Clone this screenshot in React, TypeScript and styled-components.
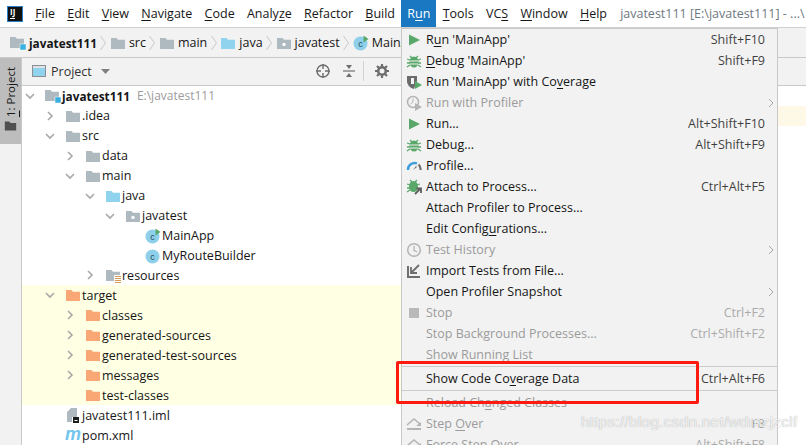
import React from "react";
import styled, { createGlobalStyle } from "styled-components";

const GlobalStyle = createGlobalStyle`
  html, body {
    margin: 0;
    padding: 0;
    background: #ffffff;
  }
  * {
    box-sizing: border-box;
  }
  u {
    text-underline-offset: 2px;
  }
`;

const FONT = `"Open Sans", "Noto Sans", sans-serif`;

const Page = styled.div`
  position: relative;
  width: 806px;
  height: 445px;
  overflow: hidden;
  font-family: ${FONT};
  font-size: 12.5px;
  color: #161616;
  background: #ffffff;
`;

/* ---------- top bars ---------- */

const MenuBar = styled.div`
  display: flex;
  align-items: center;
  height: 28px;
  padding-left: 7px;
  background: #ffffff;
  border-bottom: 1px solid #d0d0d0;
  white-space: nowrap;
`;

const Logo = styled.div`
  display: flex;
  flex-direction: column;
  justify-content: space-between;
  width: 16px;
  height: 16px;
  margin-right: 6px;
  padding: 1px 2px 2px;
  background: #111111;
  border: 1px solid #2a7fc9;
  color: #ffffff;
  font-size: 8px;
  font-weight: 700;
  line-height: 8px;

  &::after {
    content: "";
    width: 5px;
    height: 1px;
    background: #ffffff;
  }
`;

const TopMenu = styled.div<{ $active?: boolean }>`
  display: flex;
  align-items: center;
  height: 27px;
  padding: 0 6.15px;
  background: ${(p) => (p.$active ? "#1a78c2" : "transparent")};
  color: ${(p) => (p.$active ? "#ffffff" : "#161616")};
`;

const WindowTitle = styled.div`
  margin-left: 7px;
  color: #6e7880;
`;

const Crumbs = styled.div`
  display: flex;
  align-items: center;
  height: 30px;
  padding-left: 10px;
  background: #f2f2f2;
  border-bottom: 1px solid #c9c9c9;
  white-space: nowrap;
`;

const Crumb = styled.div<{ $bold?: boolean }>`
  display: flex;
  align-items: center;
  gap: 3px;
  font-size: ${(p) => (p.$bold ? "11.8px" : "inherit")};
  font-weight: ${(p) => (p.$bold ? 700 : 400)};
`;

const CrumbSep = styled.svg`
  width: 6px;
  height: 16px;
  margin: 0 3.5px;
  flex: none;
`;

/* ---------- main area ---------- */

const Main = styled.div`
  display: flex;
  height: 387px;
`;

const Strip = styled.div`
  width: 22px;
  flex: none;
  background: #f2f2f2;
  border-right: 1px solid #c9c9c9;
`;

const StripTab = styled.div`
  display: flex;
  flex-direction: column;
  align-items: center;
  gap: 2px;
  height: 86px;
  padding-top: 9px;
  background: #bdbdbd;
`;

const StripLabel = styled.span`
  writing-mode: vertical-rl;
  transform: rotate(180deg);
  line-height: 21px;
  font-size: 11.5px;
`;

const Panel = styled.div`
  width: 380px;
  flex: none;
  display: flex;
  flex-direction: column;
`;

const PanelHeader = styled.div`
  display: flex;
  align-items: center;
  height: 28px;
  padding-left: 9px;
  background: #f2f2f2;
  border-bottom: 1px solid #c9c9c9;
`;

const PanelTitle = styled.span`
  margin: 0 9px 0 4px;
  color: #333333;
`;

const PanelTools = styled.div`
  display: flex;
  align-items: center;
  margin-left: auto;
  padding-right: 12px;
  gap: 10px;
`;

const ToolDivider = styled.div`
  width: 1px;
  height: 20px;
  margin-left: -4px;
  background: #d2d2d2;
`;

const Row = styled.div<{ $depth: number; $excluded?: boolean }>`
  display: flex;
  align-items: center;
  height: 20px;
  padding-left: ${(p) => p.$depth * 20}px;
  background: ${(p) => (p.$excluded ? "#ffffe4" : "transparent")};
  white-space: nowrap;
`;

const ArrowCell = styled.div`
  display: flex;
  justify-content: center;
  width: 16px;
  margin-right: 7px;
`;

const IconCell = styled.div`
  display: flex;
  width: 16px;
  height: 16px;
  margin-right: 1px;
`;

const RowName = styled.span<{ $bold?: boolean }>`
  font-size: ${(p) => (p.$bold ? "11.8px" : "inherit")};
  font-weight: ${(p) => (p.$bold ? 700 : 400)};
`;

const RowPath = styled.span`
  margin-left: 7px;
  font-size: 12px;
  color: #9c9c9c;
`;

const PomIcon = styled.span`
  width: 15px;
  text-align: center;
  font-family: "Liberation Sans", sans-serif;
  font-size: 18px;
  line-height: 14px;
  font-style: italic;
  font-weight: 700;
  color: #72c6ec;
`;

const Editor = styled.div`
  flex: 1;
  display: flex;
  flex-direction: column;
`;

const EditorTabs = styled.div`
  height: 28px;
  background: #f2f2f2;
  border-bottom: 1px solid #c9c9c9;
`;

const CaretLine = styled.div`
  height: 20px;
  margin-top: 20px;
  background: #fef8e6;
`;

/* ---------- run menu ---------- */

const Dropdown = styled.div`
  position: absolute;
  top: 28px;
  left: 401px;
  width: 377px;
  height: 430px;
  background: #f2f2f2;
  border: 1px solid #c8c8c8;
`;

const Item = styled.div<{ $disabled?: boolean }>`
  display: grid;
  grid-template-columns: 24px 1fr auto 12px;
  align-items: center;
  height: 21px;
  white-space: nowrap;
  color: ${(p) => (p.$disabled ? "#9b9b9b" : "#161616")};
`;

const ItemIcon = styled.div`
  display: flex;
  justify-content: center;
`;

const Shortcut = styled.span`
  color: inherit;
  opacity: 0.82;
`;

const SubArrow = styled.svg`
  justify-self: center;
  width: 6px;
  height: 10px;
`;

const Separator = styled.div`
  height: 1px;
  margin: 1px 0 1px;
  background: #cdcdcd;
`;

const Annotation = styled.div`
  position: absolute;
  top: 361px;
  left: 396px;
  width: 303px;
  height: 43px;
  border: 3px solid #ff1a10;
  border-radius: 2px;
`;

const Watermark = styled.div`
  position: absolute;
  top: 413px;
  left: 581px;
  font-family: "Liberation Sans", sans-serif;
  font-size: 15.500px;
  letter-spacing: 0.2px;
  color: rgba(255, 255, 255, 0.85);
  text-shadow: 0 0 1px rgba(90, 90, 90, 0.6);
`;

/* ---------- drawings ---------- */

const Svg = ({ children, size = 16 }: { children: React.ReactNode; size?: number }) => (
  <svg width={size} height={size} viewBox="0 0 16 16">
    {children}
  </svg>
);

const FOLDER = "M1 3h5.5l1.5 1.8h7V14H1z";

const Folder = ({ color = "#afb9c0" }: { color?: string }) => (
  <Svg>
    <path d={FOLDER} fill={color} />
  </Svg>
);

const ModuleFolder = () => (
  <Svg>
    <path d={FOLDER} fill="#afb9c0" transform="translate(-1 -1)" />
    <rect x="10" y="9" width="6" height="6" fill="#37b0e0" stroke="#ffffff" strokeWidth="0.5" />
  </Svg>
);

const PackageFolder = () => (
  <Svg>
    <path d={FOLDER} fill="#afb9c0" />
    <circle cx="8" cy="9.4" r="1.7" fill="#ffffff" />
  </Svg>
);

const ResourceFolder = () => (
  <Svg>
    <path d={FOLDER} fill="#afb9c0" />
    <rect x="9" y="8" width="7" height="8" fill="#ffffff" />
    <path d="M10 9.5h6M10 11.5h6M10 13.5h6M10 15.5h6" stroke="#d39a55" strokeWidth="1" />
  </Svg>
);

const ClassIcon = ({ runnable }: { runnable?: boolean }) => (
  <Svg>
    <circle cx="7.5" cy="8.5" r="7" fill="#8ed0ea" />
    <text x="7.5" y="11.5" textAnchor="middle" fontFamily="Liberation Sans, sans-serif" fontSize="9" fill="#27485a">
      c
    </text>
    {runnable && <path d="M10.5 0.5l5 3.5-5 3.5z" fill="#59a869" />}
  </Svg>
);

const ImlIcon = () => (
  <Svg>
    <path d="M6 1h6v9H7v5H2V5z" fill="#afb9c0" />
    <rect x="8" y="10" width="6" height="6" fill="#1c1c1c" />
    <rect x="9.5" y="13" width="3" height="1" fill="#ffffff" />
  </Svg>
);

const WindowIcon = () => (
  <Svg>
    <rect x="1.5" y="2.5" width="13" height="11" fill="#8fd3ee" stroke="#8a8f93" />
    <rect x="2" y="3" width="12" height="2" fill="#dfe3e5" />
  </Svg>
);

const Caret = () => (
  <svg width="9" height="5" viewBox="0 0 9 5">
    <path d="M0 0h9L4.500 5z" fill="#7f7f7f" />
  </svg>
);

const Chevron = ({ open }: { open?: boolean }) => (
  <svg width="10" height="10" viewBox="0 0 10 10">
    <path
      d={open ? "M1 3l4 4 4-4" : "M3 1l4 4-4 4"}
      fill="none"
      stroke="#a8a8a8"
      strokeWidth="1.6"
    />
  </svg>
);

const CrumbChevron = () => (
  <CrumbSep viewBox="0 0 6 16">
    <path d="M0.500 1l5 7-5 7" fill="none" stroke="#c9c9c9" />
  </CrumbSep>
);

const Crosshair = () => (
  <Svg>
    <circle cx="8" cy="8" r="6" fill="none" stroke="#6e6e6e" strokeWidth="1.4" />
    <path d="M8 1v5M8 10v5M1 8h5M10 8h5" stroke="#6e6e6e" strokeWidth="1.4" />
  </Svg>
);

const CollapseAll = () => (
  <Svg>
    <path d="M2 8h12" stroke="#6e6e6e" strokeWidth="1.2" />
    <path d="M5 2h6L8 6zM5 14h6L8 10z" fill="#6e6e6e" />
  </Svg>
);

const Gear = () => (
  <Svg>
    <circle cx="8" cy="8" r="3.800" fill="none" stroke="#6e6e6e" strokeWidth="2.6" />
    <path
      d="M8 1v3M8 12v3M1 8h3M12 8h3M3 3l2 2M11 11l2 2M13 3l-2 2M5 11l-2 2"
      stroke="#6e6e6e"
      strokeWidth="2.200"
    />
  </Svg>
);

const StripFolder = () => (
  <Svg size={13}>
    <path d={FOLDER} fill="#4f4f4f" />
  </Svg>
);

const RunIcon = ({ color = "#59a869" }: { color?: string }) => (
  <Svg>
    <path d="M3 2.500l11 5.500-11 5.500z" fill={color} />
  </Svg>
);

const BugIcon = () => (
  <Svg>
    <path
      d="M4 3l2 2M12 3l-2 2M1 6l3 1M15 6l-3 1M1 10h3M15 10h-3M1 14l3-2M15 14l-3-2"
      stroke="#59a869"
      strokeWidth="1.300"
    />
    <ellipse cx="8" cy="9" rx="4.500" ry="5.500" fill="#59a869" />
    <path d="M4 8h8M4 11h8" stroke="#f2f2f2" />
  </Svg>
);

const CoverageIcon = () => (
  <Svg>
    <path d="M1 2h10v5l-3 8C4 14 1 11 1 7z" fill="#6b6b6b" />
    <path d="M5 4h3v6H5z" fill="#f2f2f2" />
    <path d="M9 7l7 4-7 4z" fill="#59a869" />
  </Svg>
);

const ProfilerIcon = () => (
  <Svg>
    <circle cx="7" cy="7" r="5.500" fill="none" stroke="#b4b4b4" strokeWidth="1.500" />
    <path d="M7 3.500V7l-2.500 2" fill="none" stroke="#b4b4b4" />
    <path d="M9 8l7 4-7 4z" fill="#b4b4b4" />
  </Svg>
);

const GaugeIcon = () => (
  <Svg>
    <path d="M2 12a6.500 6.500 0 0 1 9-6.500" fill="none" stroke="#3d9fdc" strokeWidth="2.400" />
    <path d="M12.500 6.500A6.500 6.500 0 0 1 14.500 12" fill="none" stroke="#6e6e6e" strokeWidth="2.200" />
    <path d="M7 12l3-4 1 1z" fill="#6e6e6e" />
  </Svg>
);

const AttachIcon = () => (
  <Svg>
    <path d="M4 1l2 2M11 1l-2 2M1 5l3 1M14 5l-3 1M1 9h3M1 13l3-2" stroke="#59a869" strokeWidth="1.300" />
    <ellipse cx="7.500" cy="7.500" rx="4.500" ry="5.500" fill="#59a869" />
    <path d="M9 15l5-5M10.500 9.500H15V14" fill="none" stroke="#5f5f5f" strokeWidth="1.800" />
  </Svg>
);

const HistoryIcon = () => (
  <Svg>
    <circle cx="8" cy="8" r="6.300" fill="none" stroke="#b4b4b4" strokeWidth="1.500" />
    <path d="M8 4v4.300l3 1.700" fill="none" stroke="#b4b4b4" strokeWidth="1.300" />
  </Svg>
);

const ImportIcon = () => (
  <Svg>
    <path d="M2 3v11h12" fill="none" stroke="#6e6e6e" strokeWidth="2" />
    <path d="M13 2L6 9M5 4v6h6" fill="none" stroke="#6e6e6e" strokeWidth="1.800" />
  </Svg>
);

const StopIcon = () => (
  <Svg>
    <rect x="3" y="3" width="10" height="10" fill="#b9b9b9" />
  </Svg>
);

const StepIcon = () => (
  <Svg>
    <path d="M1 9l7-6 6 5" fill="none" stroke="#b4b4b4" strokeWidth="1.600" />
    <path d="M10 10h5V6z" fill="#b4b4b4" />
    <rect x="1" y="12" width="14" height="2" fill="#b4b4b4" />
  </Svg>
);

/* ---------- data ---------- */

type TreeNode = {
  depth: number;
  name: string;
  icon: React.ReactNode;
  arrow?: "open" | "closed";
  bold?: boolean;
  path?: string;
  excluded?: boolean;
};

const ORANGE = "#f9a875";

const tree: TreeNode[] = [
  { depth: 0, name: "javatest111", icon: <ModuleFolder />, arrow: "open", bold: true, path: "E:\\javatest111" },
  { depth: 1, name: ".idea", icon: <Folder />, arrow: "closed" },
  { depth: 1, name: "src", icon: <Folder />, arrow: "open" },
  { depth: 2, name: "data", icon: <Folder />, arrow: "closed" },
  { depth: 2, name: "main", icon: <Folder />, arrow: "open" },
  { depth: 3, name: "java", icon: <Folder color="#8fd3ee" />, arrow: "open" },
  { depth: 4, name: "javatest", icon: <PackageFolder />, arrow: "open" },
  { depth: 5, name: "MainApp", icon: <ClassIcon runnable /> },
  { depth: 5, name: "MyRouteBuilder", icon: <ClassIcon /> },
  { depth: 3, name: "resources", icon: <ResourceFolder />, arrow: "closed" },
  { depth: 1, name: "target", icon: <Folder color={ORANGE} />, arrow: "open", excluded: true },
  { depth: 2, name: "classes", icon: <Folder color={ORANGE} />, arrow: "closed", excluded: true },
  { depth: 2, name: "generated-sources", icon: <Folder color={ORANGE} />, arrow: "closed", excluded: true },
  { depth: 2, name: "generated-test-sources", icon: <Folder color={ORANGE} />, arrow: "closed", excluded: true },
  { depth: 2, name: "messages", icon: <Folder color={ORANGE} />, arrow: "closed", excluded: true },
  { depth: 2, name: "test-classes", icon: <Folder color={ORANGE} />, excluded: true },
  { depth: 1, name: "javatest111.iml", icon: <ImlIcon /> },
  { depth: 1, name: "pom.xml", icon: <PomIcon>m</PomIcon> },
];

type MenuEntry = {
  label: React.ReactNode;
  icon?: React.ReactNode;
  shortcut?: string;
  disabled?: boolean;
  submenu?: boolean;
  separator?: boolean;
};

const runMenu: MenuEntry[] = [
  { label: <>R<u>u</u>n 'MainApp'</>, icon: <RunIcon />, shortcut: "Shift+F10" },
  { label: <><u>D</u>ebug 'MainApp'</>, icon: <BugIcon />, shortcut: "Shift+F9" },
  { label: <>Run 'MainApp' with Co<u>v</u>erage</>, icon: <CoverageIcon /> },
  { label: "Run with Profiler", icon: <ProfilerIcon />, disabled: true, submenu: true },
  { label: "Run...", icon: <RunIcon />, shortcut: "Alt+Shift+F10" },
  { label: "Debug...", icon: <BugIcon />, shortcut: "Alt+Shift+F9" },
  { label: "Profile...", icon: <GaugeIcon /> },
  { label: "Attach to Process...", icon: <AttachIcon />, shortcut: "Ctrl+Alt+F5" },
  { label: "Attach Profiler to Process..." },
  { label: <>Edit Config<u>u</u>rations...</> },
  { label: "Test History", icon: <HistoryIcon />, disabled: true, submenu: true },
  { label: "Import Tests from File...", icon: <ImportIcon /> },
  { label: "Open Profiler Snapshot", submenu: true },
  { label: "Stop", icon: <StopIcon />, shortcut: "Ctrl+F2", disabled: true },
  { label: "Stop Background Processes...", shortcut: "Ctrl+Shift+F2", disabled: true },
  { label: "Show Running List", disabled: true, separator: true },
  { label: <>Show Code Co<u>v</u>erage Data</>, shortcut: "Ctrl+Alt+F6", separator: true },
  { label: <>Reload Ch<u>a</u>nged Classes</>, disabled: true },
  { label: <>Step <u>O</u>ver</>, icon: <StepIcon />, shortcut: "F8", disabled: true },
  { label: "Force Step Over", icon: <StepIcon />, shortcut: "Alt+Shift+F8", disabled: true },
];

const topMenus: React.ReactNode[] = [
  <><u>F</u>ile</>,
  <><u>E</u>dit</>,
  <><u>V</u>iew</>,
  <><u>N</u>avigate</>,
  <><u>C</u>ode</>,
  <>Analy<u>z</u>e</>,
  <><u>R</u>efactor</>,
  <><u>B</u>uild</>,
];

const topMenusAfter: React.ReactNode[] = [
  <><u>T</u>ools</>,
  <>VC<u>S</u></>,
  <><u>W</u>indow</>,
  <><u>H</u>elp</>,
];

const crumbs = [
  { name: "javatest111", icon: <ModuleFolder />, bold: true },
  { name: "src", icon: <Folder /> },
  { name: "main", icon: <Folder /> },
  { name: "java", icon: <Folder color="#8fd3ee" /> },
  { name: "javatest", icon: <PackageFolder /> },
  { name: "MainApp", icon: <ClassIcon runnable /> },
];

export default function App() {
  return (
    <Page>
      <GlobalStyle />
      <MenuBar>
        <Logo>IJ</Logo>
        {topMenus.map((m, i) => (
          <TopMenu key={i}>{m}</TopMenu>
        ))}
        <TopMenu $active>
          R<u>u</u>n
        </TopMenu>
        {topMenusAfter.map((m, i) => (
          <TopMenu key={i}>{m}</TopMenu>
        ))}
        <WindowTitle>javatest111 [E:\javatest111] - ...\</WindowTitle>
      </MenuBar>

      <Crumbs>
        {crumbs.map((c, i) => (
          <React.Fragment key={c.name}>
            {i > 0 && <CrumbChevron />}
            <Crumb $bold={c.bold}>
              {c.icon}
              {c.name}
            </Crumb>
          </React.Fragment>
        ))}
      </Crumbs>

      <Main>
        <Strip>
          <StripTab>
            <StripLabel>
              <u>1</u>: Project
            </StripLabel>
            <StripFolder />
          </StripTab>
        </Strip>

        <Panel>
          <PanelHeader>
            <WindowIcon />
            <PanelTitle>Project</PanelTitle>
            <Caret />
            <PanelTools>
              <Crosshair />
              <CollapseAll />
              <ToolDivider />
              <Gear />
            </PanelTools>
          </PanelHeader>
          {tree.map((node) => (
            <Row key={node.name} $depth={node.depth} $excluded={node.excluded}>
              <ArrowCell>{node.arrow && <Chevron open={node.arrow === "open"} />}</ArrowCell>
              <IconCell>{node.icon}</IconCell>
              <RowName $bold={node.bold}>{node.name}</RowName>
              {node.path && <RowPath>{node.path}</RowPath>}
            </Row>
          ))}
        </Panel>

        <Editor>
          <EditorTabs />
          <CaretLine />
        </Editor>
      </Main>

      <Dropdown>
        {runMenu.map((entry, i) => (
          <React.Fragment key={i}>
            <Item $disabled={entry.disabled}>
              <ItemIcon>{entry.icon}</ItemIcon>
              <span>{entry.label}</span>
              <Shortcut>{entry.shortcut}</Shortcut>
              {entry.submenu ? (
                <SubArrow viewBox="0 0 6 10">
                  <path d="M1 1l4 4-4 4" fill="none" stroke="#a8a8a8" />
                </SubArrow>
              ) : (
                <span />
              )}
            </Item>
            {entry.separator && <Separator />}
          </React.Fragment>
        ))}
      </Dropdown>

      <Annotation />
      <Watermark>https://blog.csdn.net/wdmzjzclf</Watermark>
    </Page>
  );
}
